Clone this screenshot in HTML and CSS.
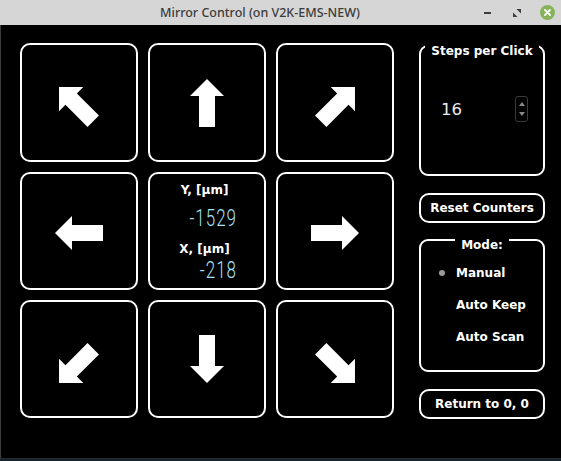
FILE: index.html
```html
<!DOCTYPE html>
<html lang="en">
<head>
<meta charset="utf-8">
<title>Mirror Control</title>
<link rel="stylesheet" href="styles.css">
</head>
<body>
<div class="window">
  <header class="titlebar">
    <span class="title">Mirror Control (on V2K-EMS-NEW)</span>
    <div class="controls">
      <span class="ctl ctl-min"><span class="dash"></span></span>
      <span class="ctl ctl-max">
        <svg width="8" height="8" viewBox="0 0 8 8"><polygon points="3.5,0 8,0 8,4.5" fill="#3c3c3c"/><polygon points="0,3.5 0,8 4.5,8" fill="#3c3c3c"/></svg>
      </span>
      <span class="ctl ctl-close">
        <svg width="15" height="15" viewBox="0 0 15 15"><circle cx="7.5" cy="7.5" r="7.5" fill="#86b35a"/><path d="M5 5 L10 10 M10 5 L5 10" stroke="#fff" stroke-width="1.8" stroke-linecap="round"/></svg>
      </span>
    </div>
  </header>
  <main class="content">
    <div class="pad">
      <div class="cell"><svg class="diag" width="40" height="40" viewBox="7 7 39.66 39.66"><g transform="rotate(-45 24 24)"><polygon class="arrow" points="24,0 41,17 32,17 32,48 16,48 16,17 7,17"/></g></svg></div>
      <div class="cell"><svg width="34" height="48" viewBox="7 0 34 48"><polygon class="arrow" points="24,0 41,17 32,17 32,48 16,48 16,17 7,17"/></svg></div>
      <div class="cell"><svg class="diag" width="40" height="40" viewBox="1.34 7 39.66 39.66"><g transform="rotate(45 24 24)"><polygon class="arrow" points="24,0 41,17 32,17 32,48 16,48 16,17 7,17"/></g></svg></div>

      <div class="cell"><svg class="horiz" width="48" height="34" viewBox="0 7 48 34"><g transform="rotate(-90 24 24)"><polygon class="arrow" points="24,0 41,17 32,17 32,48 16,48 16,17 7,17"/></g></svg></div>
      <div class="cell readout">
        <div class="lbl">Y, [µm]</div>
        <div class="lcd lcd-y">-1529</div>
        <div class="lbl lbl-x">X, [µm]</div>
        <div class="lcd lcd-x">-218</div>
      </div>
      <div class="cell"><svg class="horiz" width="48" height="34" viewBox="0 7 48 34"><g transform="rotate(90 24 24)"><polygon class="arrow" points="24,0 41,17 32,17 32,48 16,48 16,17 7,17"/></g></svg></div>

      <div class="cell"><svg class="diag" width="40" height="40" viewBox="7 1.34 39.66 39.66"><g transform="rotate(-135 24 24)"><polygon class="arrow" points="24,0 41,17 32,17 32,48 16,48 16,17 7,17"/></g></svg></div>
      <div class="cell"><svg width="34" height="48" viewBox="7 0 34 48"><g transform="rotate(180 24 24)"><polygon class="arrow" points="24,0 41,17 32,17 32,48 16,48 16,17 7,17"/></g></svg></div>
      <div class="cell"><svg class="diag" width="40" height="40" viewBox="1.34 1.34 39.66 39.66"><g transform="rotate(135 24 24)"><polygon class="arrow" points="24,0 41,17 32,17 32,48 16,48 16,17 7,17"/></g></svg></div>
    </div>

    <aside class="side">
      <fieldset class="group group-steps">
        <legend>Steps per Click</legend>
        <div class="spin">
          <span class="spin-value">16</span>
          <span class="spin-btns"><span class="tri-up"></span><span class="tri-down"></span></span>
        </div>
      </fieldset>
      <button class="btn">Reset Counters</button>
      <fieldset class="group group-mode">
        <legend>Mode:</legend>
        <div class="radios">
          <div class="radio"><span class="dot on"></span>Manual</div>
          <div class="radio"><span class="dot"></span>Auto Keep</div>
          <div class="radio"><span class="dot"></span>Auto Scan</div>
        </div>
      </fieldset>
      <button class="btn">Return to 0, 0</button>
    </aside>
  </main>
</div>
</body>
</html>
```

FILE: styles.css
```css
* { box-sizing: border-box; }
html, body { margin: 0; padding: 0; }
body {
  background: #16222c;
  font-family: "DejaVu Sans", sans-serif;
  width: 561px;
  height: 461px;
  overflow: hidden;
}
.window {
  width: 561px;
  height: 459px;
  display: flex;
  flex-direction: column;
  background: #000;
}
.titlebar {
  height: 25px;
  flex: none;
  background: #d6d6d6;
  display: flex;
  align-items: center;
}
.title {
  flex: 1;
  padding-left: 42px;
  text-align: center;
  font-family: "Noto Sans", sans-serif;
  font-weight: 500;
  font-size: 12.5px;
  color: #3c3c3c;
}
.controls {
  width: 83px;
  display: flex;
  align-items: center;
  padding-right: 5px;
}
.ctl { display: flex; align-items: center; justify-content: center; height: 20px; }
.ctl-min { width: 18px; }
.ctl-max { width: 22px; margin-left: 10px; }
.ctl-close { width: 18px; margin-left: 10px; }
.dash { width: 7px; height: 2px; background: #3c3c3c; }

.content {
  flex: 1;
  display: flex;
  align-items: flex-start;
  padding: 9px 0 0 19px;
  border-left: 1px solid #3d3d3d;
  border-bottom: 1px solid #2a2a2a;
}
.pad {
  margin-top: 9px;
  display: grid;
  grid-template-columns: repeat(3, 118px);
  grid-template-rows: 119px 118px 118px;
  gap: 10px;
}
.cell {
  border: 2px solid #fff;
  border-radius: 10px;
  display: flex;
  align-items: center;
  justify-content: center;
}
.arrow { fill: #fff; }
.diag { margin-top: 8px; }
.horiz { margin-top: 3px; }

.readout {
  flex-direction: column;
  justify-content: flex-start;
  padding-top: 8px;
}
.lbl {
  font-weight: bold;
  font-size: 12px;
  line-height: 16px;
  color: #fff;
  margin-right: 5px;
}
.lbl-x { margin-top: 12px; }
.lcd {
  width: 56px;
  height: 22px;
  margin-left: 4px;
  text-align: right;
  font-family: "Roboto", "DejaVu Sans", sans-serif;
  font-weight: 300;
  font-size: 17px;
  line-height: 22px;
  letter-spacing: 1px;
  font-variant-numeric: tabular-nums;
  color: #a8e2f7;
  transform: scaleY(1.4);
}
.lcd-y { margin-top: 9px; }
.lcd-x { margin-top: 2px; }

.side {
  margin-left: 25px;
  width: 126px;
  display: flex;
  flex-direction: column;
}
.group {
  margin: 0;
  padding: 0;
  min-width: 0;
  border: 2px solid #fff;
  border-radius: 9px;
}
.group legend {
  margin: 0 auto;
  padding: 10px 6px 0;
  line-height: 14px;
  font-weight: bold;
  font-size: 12px;
  color: #fff;
}
.group-steps { height: 142px; }
.group-mode { height: 144px; margin-top: 5px; }

.spin {
  display: flex;
  align-items: center;
  height: 26px;
  margin-top: 38px;
  padding-left: 20px;
  padding-right: 15px;
}
.spin-value {
  flex: 1;
  font-size: 16.5px;
  color: #ececec;
}
.spin-btns {
  width: 13px;
  height: 26px;
  border: 1px solid #3a3a3a;
  border-radius: 3px;
  display: flex;
  flex-direction: column;
  align-items: center;
  justify-content: center;
  gap: 6px;
}
.tri-up {
  width: 0; height: 0;
  border-left: 3.5px solid transparent;
  border-right: 3.5px solid transparent;
  border-bottom: 4px solid #8a8a8a;
}
.tri-down {
  width: 0; height: 0;
  border-left: 3.5px solid transparent;
  border-right: 3.5px solid transparent;
  border-top: 4px solid #8a8a8a;
}

.radios {
  display: flex;
  flex-direction: column;
  gap: 16px;
  margin-top: 13px;
}
.radio {
  display: flex;
  align-items: center;
  height: 16px;
  padding-left: 18px;
  font-weight: bold;
  font-size: 12px;
  color: #fff;
}
.dot {
  width: 6px;
  height: 6px;
  border-radius: 50%;
  margin-right: 11px;
}
.dot.on { background: #9a9a9a; }

.btn {
  margin-top: 17px;
  height: 30px;
  padding: 0;
  border: 2px solid #fff;
  border-radius: 10px;
  background: #000;
  color: #fff;
  font-family: "DejaVu Sans", sans-serif;
  font-weight: bold;
  font-size: 12px;
}
```
